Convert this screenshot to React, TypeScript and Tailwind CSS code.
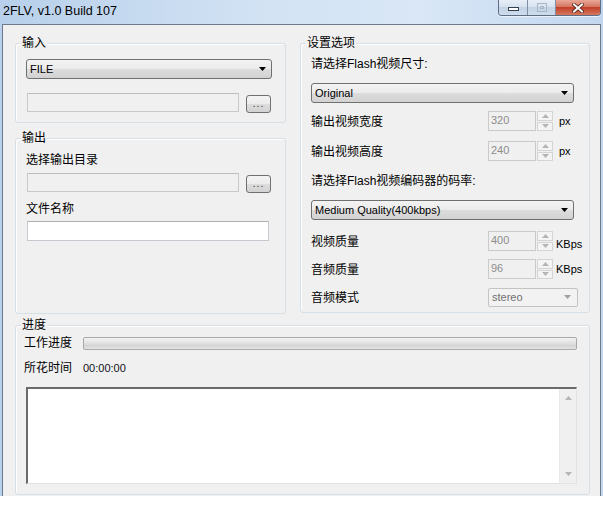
import React from "react"

const comboBg = "bg-[linear-gradient(#f3f3f3,#ebebeb_50%,#dddddd_50%,#d2d2d2)]"

const GroupBox = ({ label, className, children }: { label: string; className: string; children?: React.ReactNode }) => (
  <div className={`relative rounded-[3px] border border-[#d5dfe5] shadow-[inset_1px_1px_0_#ffffff] ${className}`}>
    <span className="absolute left-[5px] top-[-9px] bg-[#f0f0f0] px-[1px] text-[12px] leading-[16px]">{label}</span>
    {children}
  </div>
)

const Arrow = ({ color = "#000" }: { color?: string }) => (
  <svg width="7" height="4" viewBox="0 0 7 4">
    <path d="M0 0h7L3.5 4z" fill={color} />
  </svg>
)

const Combo = ({ value, className }: { value: string; className: string }) => (
  <div className={`flex h-[20px] items-center justify-between rounded-[3px] border border-[#707070] ${comboBg} pl-[3px] pr-[5px] text-[11px] ${className}`}>
    <span className="font-['Liberation_Sans']">{value}</span>
    <Arrow />
  </div>
)

const Disabled = ({ className }: { className: string }) => (
  <div className={`h-[19px] border border-[#c9c9c9] border-t-[#bdbdbd] bg-[#f0f0f0] ${className}`} />
)

const Dots = ({ className }: { className: string }) => (
  <div className={`flex h-[18px] w-[25px] items-center justify-center rounded-[3px] border border-[#707070] ${comboBg} text-[10px] leading-[10px] tracking-[1px] text-[#3a2a2a] ${className}`}>
    ...
  </div>
)

const Tri = ({ up }: { up?: boolean }) => (
  <svg width="7" height="4" viewBox="0 0 7 4">
    <path d={up ? "M0 4h7L3.5 0z" : "M0 0h7L3.5 4z"} fill="#b5b5b5" />
  </svg>
)

const Spin = ({ value }: { value: string }) => (
  <div className="flex h-[20px]">
    <div className="w-[48px] border border-[#cacaca] bg-[#f0f0f0] pl-[2px] font-['Liberation_Sans'] text-[11px] leading-[16px] text-[#8d8d8d]">
      {value}
    </div>
    <div className="ml-[1px] flex w-[16px] flex-col gap-[1px]">
      <div className="flex flex-1 items-center justify-center border border-[#d4d4d4] bg-[#f4f4f4]">
        <Tri up />
      </div>
      <div className="flex flex-1 items-center justify-center border border-[#d4d4d4] bg-[#f4f4f4]">
        <Tri />
      </div>
    </div>
  </div>
)

const Row = ({ label, children, className }: { label: string; children: React.ReactNode; className: string }) => (
  <div className={`flex h-[20px] items-center ${className}`}>
    <span className="w-[177px] pt-[1px] text-[12px] leading-[18px]">{label}</span>
    {children}
  </div>
)

export default function App() {
  return (
    <div className="h-[516px] w-[603px] overflow-hidden bg-white font-['Liberation_Sans','Noto_Sans_CJK_SC',sans-serif] text-black">
      <div className="flex h-[496px] flex-col bg-[linear-gradient(90deg,#b8d0eb,#d3e3f4_45%,#d9e7f6_70%,#c2d7ef)]">
        {/* title bar */}
        <div className="flex h-[24px] justify-between">
          <span className="pl-[3px] pt-[3px] text-[12.5px] leading-[16px]">2FLV, v1.0 Build 107</span>
          <div className="mr-[2px] flex h-[16px] overflow-hidden rounded-b-[4px] border border-t-0 border-[#5d6d83] shadow-[0_1px_0_#e9f1fa]">
            <div className="flex w-[29px] items-end justify-center border-r border-[#7e8fa4] bg-[linear-gradient(#e7eef7,#d5e1ee_50%,#c3d3e5_50%,#cfdcec)] pb-[4px]">
              <div className="h-[4px] w-[11px] border border-[#36404c] bg-white" />
            </div>
            <div className="flex w-[28px] items-center justify-center border-r border-[#7e8fa4] bg-[linear-gradient(#e7eef7,#d5e1ee_50%,#c3d3e5_50%,#cfdcec)]">
              <div className="flex h-[9px] w-[10px] items-center justify-center border border-[#a8b6c6]">
                <div className="h-[3px] w-[4px] border border-[#a8b6c6]" />
              </div>
            </div>
            <div className="flex w-[44px] items-center justify-center bg-[linear-gradient(#e8a897,#d4705c_50%,#c23f2a_50%,#d6785f)]">
              <svg width="12" height="10" viewBox="0 0 12 10">
                <path d="M2 1.5l8 7M10 1.5l-8 7" stroke="#4a2018" strokeWidth="3.6" strokeLinecap="square" />
                <path d="M2 1.5l8 7M10 1.5l-8 7" stroke="#ffffff" strokeWidth="2" strokeLinecap="square" />
              </svg>
            </div>
          </div>
        </div>

        {/* client area */}
        <div className="mx-[2px] flex-1 border border-b-0 border-[#6d7a89] bg-[#f0f0f0] pl-[12px] pt-[18px]">
          <div className="flex items-start">
            <div className="flex w-[271px] flex-col">
              <GroupBox label="输入" className="h-[80px]">
                <Combo value="FILE" className="ml-[10px] mt-[15px] w-[246px]" />
                <div className="mt-[14px] flex items-start">
                  <Disabled className="ml-[11px] w-[212px]" />
                  <Dots className="ml-[7px] mt-[2px]" />
                </div>
              </GroupBox>
              <GroupBox label="输出" className="mt-[15px] h-[176px]">
                <div className="ml-[10px] mt-[12px] text-[12px] leading-[18px]">选择输出目录</div>
                <div className="mt-[4px] flex items-start">
                  <Disabled className="ml-[11px] w-[212px]" />
                  <Dots className="ml-[7px] mt-[2px]" />
                </div>
                <div className="ml-[10px] mt-[7px] text-[12px] leading-[18px]">文件名称</div>
                <div className="ml-[11px] mt-[3px] h-[20px] w-[242px] border border-[#c5c9cf] border-t-[#abadb3] bg-white" />
              </GroupBox>
            </div>

            <GroupBox label="设置选项" className="ml-[14px] h-[270px] w-[290px]">
              <div className="flex flex-col pl-[10px]">
                <div className="mt-[11px] text-[12px] leading-[18px]">请选择Flash视频尺寸:</div>
                <Combo value="Original" className="mt-[10px] w-[263px]" />
                <Row label="输出视频宽度" className="mt-[8px]">
                  <Spin value="320" />
                  <span className="ml-[6px] text-[11px]">px</span>
                </Row>
                <Row label="输出视频高度" className="mt-[10px]">
                  <Spin value="240" />
                  <span className="ml-[6px] text-[11px]">px</span>
                </Row>
                <div className="mt-[11px] text-[12px] leading-[18px]">请选择Flash视频编码器的码率:</div>
                <Combo value="Medium Quality(400kbps)" className="mt-[10px] w-[263px]" />
                <Row label="视频质量" className="mt-[11px]">
                  <Spin value="400" />
                  <span className="ml-[3px] mt-[7px] text-[11px]">KBps</span>
                </Row>
                <Row label="音频质量" className="mt-[8px]">
                  <Spin value="96" />
                  <span className="ml-[3px] text-[11px]">KBps</span>
                </Row>
                <Row label="音频模式" className="mt-[8px]">
                  <div className="flex h-[19px] w-[90px] items-center justify-between rounded-[2px] border border-[#c3c3c3] bg-[#f2f2f2] pl-[3px] pr-[6px] text-[11px] text-[#707070]">
                    <span>stereo</span>
                    <Arrow color="#a0a0a0" />
                  </div>
                </Row>
              </div>
            </GroupBox>
          </div>

          <GroupBox label="进度" className="mt-[11px] h-[170px] w-[575px]">
            <div className="ml-[8px] mt-[8px] flex h-[18px] items-center">
              <span className="w-[59px] text-[12px] leading-[18px]">工作进度</span>
              <div className="h-[13px] w-[494px] rounded-[2px] border border-[#a9a9a9] bg-[linear-gradient(#f3f3f3,#e2e2e2_45%,#d4d4d4_70%,#e4e4e4)]" />
            </div>
            <div className="ml-[8px] mt-[7px] flex h-[18px] items-center">
              <span className="w-[59px] text-[12px] leading-[18px]">所花时间</span>
              <span className="text-[11px] text-[#101020]">00:00:00</span>
            </div>
            <div className="ml-[10px] mt-[10px] flex h-[97px] w-[551px] border-l-2 border-t-2 border-r border-b border-l-[#6a6a6a] border-t-[#6a6a6a] border-r-[#e3e3e3] border-b-[#e3e3e3] bg-white">
              <div className="flex-1" />
              <div className="flex w-[17px] flex-col items-center justify-between border-l border-[#e8e8e8] bg-[#f0f0f0] pb-[7px] pt-[7px]">
                <Tri up />
                <Tri />
              </div>
            </div>
          </GroupBox>
        </div>
      </div>
    </div>
  )
}
